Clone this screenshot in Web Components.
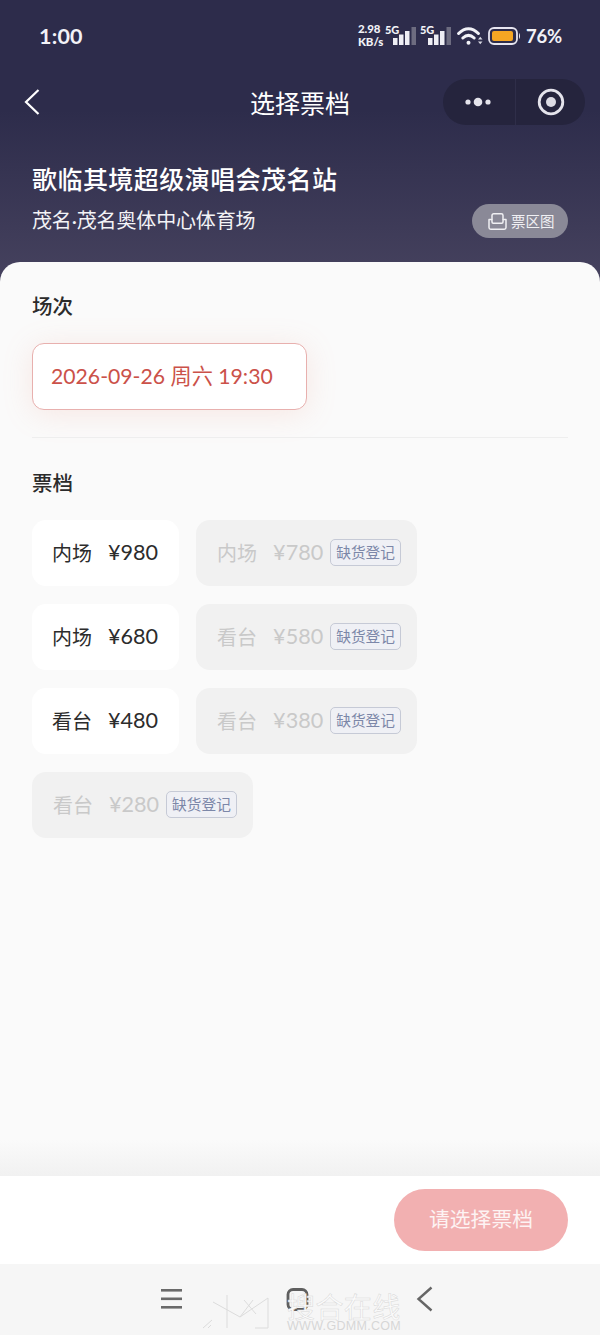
<!DOCTYPE html>
<html lang="zh-CN">
<head>
<meta charset="utf-8">
<title>选择票档</title>
<style>
  html, body { margin: 0; padding: 0; }
  body { width: 600px; height: 1335px; overflow: hidden; font-family: "Noto Sans CJK SC", "Noto Sans", sans-serif; }
</style>
</head>
<body>
<ticket-app></ticket-app>

<script>
const SANS = `"Noto Sans CJK SC", "Noto Sans", sans-serif`;
const LATIN = `Lato, "Noto Sans CJK SC", sans-serif`;

class BaseElement extends HTMLElement {
  constructor() {
    super();
    this.attachShadow({mode: 'open'});
  }

  render(html) {
    this.shadowRoot.innerHTML = html;
  }
}

class StatusBar extends BaseElement {
  connectedCallback() {
    const bars = `
      <svg class="bars" width="23" height="18" viewBox="0 0 23 18">
        <rect x="0" y="11" width="4.500" height="7" fill="#eeeef4"/>
        <rect x="6" y="7.500" width="4.500" height="10.500" fill="#eeeef4"/>
        <rect x="12" y="4" width="4.500" height="14" fill="#eeeef4"/>
        <rect x="18.500" y="0" width="4.500" height="18" fill="#6d6c80"/>
      </svg>`;

    this.render(`
      <style>
        :host { display: flex; align-items: center; height: 71px; padding: 0 38px 0 39px; color: #f2f2f7; font-family: ${LATIN}; }
        .time { font-size: 21.500px; font-weight: 700; letter-spacing: .2px; }
        .right { margin-left: auto; display: flex; align-items: center; }
        .speed { font-size: 11.500px; line-height: 12.500px; font-weight: 900; width: 27px; letter-spacing: -.1px; white-space: nowrap; }
        .net { display: flex; align-items: flex-start; }
        .net b { font-size: 11px; line-height: 12px; font-weight: 900; width: 14px; margin-top: -3px; }
        .bars { margin-left: -6px; }
        .wifi { margin-left: 6px; }
        .battery { margin-left: 5px; }
        .pct { font-size: 18.500px; font-weight: 700; margin-left: 5px; letter-spacing: -.2px; }
      </style>
      <span class="time">1:00</span>
      <div class="right">
        <div class="speed">2.98<br>KB/s</div>
        <div class="net"><b>5G</b>${bars}</div>
        <div class="net" style="margin-left:4px"><b>5G</b>${bars}</div>
        <svg class="wifi" width="26" height="20" viewBox="0 0 26 20" fill="none" stroke="#f2f2f7" stroke-width="3" stroke-linecap="round">
          <path d="M1.600 7.500C8 1 15 1 21.400 7.500"/>
          <path d="M5.800 12C9.500 8.500 13.500 8.500 17.200 12"/>
          <circle cx="11.500" cy="16.800" r="2" fill="#f2f2f7" stroke="none"/>
          <path d="M21 13.500h4.500l-2.250-2.800zM21 15.500h4.500l-2.250 2.800z" fill="#d8d8e2" stroke="none"/>
        </svg>
        <svg class="battery" width="33" height="18" viewBox="0 0 33 18">
          <rect x="1" y="1" width="28" height="16" rx="5" fill="none" stroke="#e7e5f0" stroke-width="1.800"/>
          <rect x="4" y="4" width="21" height="10" rx="2" fill="#f5a623"/>
          <path d="M31 6c1.300.8 1.300 5.200 0 6z" fill="#e7e5f0"/>
        </svg>
        <span class="pct">76%</span>
      </div>
    `);
  }
}

class NavBar extends BaseElement {
  connectedCallback() {
    this.render(`
      <style>
        :host { display: flex; align-items: center; justify-content: space-between; height: 62px; padding: 0 15px 0 24px; position: relative; color: #fff; }
        .title { position: absolute; left: 0; right: 0; text-align: center; font: 400 25px/62px ${SANS}; }
        .back { display: block; position: relative; }
        .capsule { position: relative; display: flex; align-items: center; width: 142px; height: 46px; box-sizing: border-box; border-radius: 23px; background: #25243d; }
        .capsule > div { flex: 1; display: flex; justify-content: center; align-items: center; height: 100%; }
        .capsule > div:first-child { flex: 0 0 72px; border-right: 1px solid #2f2e49; }
      </style>
      <svg class="back" width="16" height="26" viewBox="0 0 16 26" fill="none" stroke="#fff" stroke-width="2.200">
        <path d="M14.500 1 2 13l12.500 12"/>
      </svg>
      <div class="title">选择票档</div>
      <div class="capsule">
        <div>
          <svg width="32" height="12" viewBox="0 0 32 12" fill="#e5e4ec">
            <circle cx="5" cy="6" r="2.600"/><circle cx="15" cy="6" r="4.300"/><circle cx="25" cy="6" r="2.600"/>
          </svg>
        </div>
        <div>
          <svg width="28" height="28" viewBox="0 0 28 28">
            <circle cx="14" cy="14" r="11.800" fill="none" stroke="#e5e4ec" stroke-width="2.800"/>
            <circle cx="14" cy="14" r="5" fill="#dcdbe4"/>
          </svg>
        </div>
      </div>
    `);
  }
}

class EventHeader extends BaseElement {
  connectedCallback() {
    this.render(`
      <style>
        :host { display: block; height: 129px; box-sizing: border-box; padding: 29px 32px 0; color: #fff; }
        .name { font: 500 25px/32px ${SANS}; letter-spacing: .45px; }
        .row { display: flex; align-items: center; justify-content: space-between; margin-top: 10px; }
        .venue { font: 400 20px/32px ${SANS}; margin-bottom: 2px; letter-spacing: -.15px; color: #f3f3f6; }
        .map { display: flex; align-items: center; gap: 4px; box-sizing: border-box; width: 96px; height: 34px; padding-left: 16px; border-radius: 17px; background: #8a8997; font: 400 14.500px/34px ${SANS}; color: #f0f0f3; }
      </style>
      <div class="name"><slot name="name"></slot></div>
      <div class="row">
        <div class="venue"><slot name="venue"></slot></div>
        <div class="map">
          <svg width="19" height="17" viewBox="0 0 19 17" fill="none" stroke="#f0f0f3" stroke-width="1.500" stroke-linejoin="round">
            <path d="M4 7V2.500A1.700 1.700 0 0 1 5.700.8h7.600A1.700 1.700 0 0 1 15 2.500V7"/>
            <path d="M1 6.500h2c.6 0 1 .4 1 1V9c0 .8.5 1.200 1.200 1.200h8.600c.7 0 1.200-.4 1.200-1.200V7.500c0-.6.4-1 1-1h2v8a1.700 1.700 0 0 1-1.700 1.700H2.700A1.700 1.700 0 0 1 1 14.500z"/>
          </svg>
          <span>票区图</span>
        </div>
      </div>
    `);
  }
}

class SectionBlock extends BaseElement {
  connectedCallback() {
    this.render(`
      <style>
        :host { display: block; }
        h2 { margin: 0; font: 500 20.500px/26px ${SANS}; color: #2b2b2b; }
        .body { margin-top: var(--gap, 25px); }
      </style>
      <h2>${this.getAttribute('label')}</h2>
      <div class="body"><slot></slot></div>
    `);
  }
}

class SessionCard extends BaseElement {
  connectedCallback() {
    this.render(`
      <style>
        :host { display: flex; align-items: center; box-sizing: border-box; width: 275px; height: 67px; padding-left: 18px; border: 1px solid #e8b0ae; border-radius: 12px; background: #fff; box-shadow: 0 4px 30px rgba(240, 150, 130, .18); color: #cb5149; font: 400 21.200px/1 ${LATIN}; white-space: nowrap; }
      </style>
      <slot></slot>
    `);
  }
}

class TicketItem extends BaseElement {
  connectedCallback() {
    const soldOut = this.hasAttribute('sold-out');
    this.render(`
      <style>
        :host { display: flex; align-items: center; box-sizing: border-box; height: 66px; padding: 0 21px 0 20px; border-radius: 14px; background: #fff; color: #2c2c2c; white-space: nowrap; }
        :host([sold-out]) { background: #f1f1f1; color: #c9c9c9; padding: 0 16px 0 21px; }
        .area { font: 400 20px/1 ${SANS}; }
        .price { font: 400 21.600px/1 ${LATIN}; margin-left: 16px; }
        .tag { box-sizing: border-box; height: 27px; margin: -1px 0 0 7px; padding: 0 5px; border: 1px solid #c6cad6; border-radius: 5px; background: #eff0f5; color: #7c87a8; font: 400 14.700px/24px ${SANS}; }
      </style>
      <span class="area">${this.getAttribute('area')}</span>
      <span class="price">¥${this.getAttribute('price')}</span>
      ${soldOut ? '<span class="tag">缺货登记</span>' : ''}
    `);
  }
}

class ActionBar extends BaseElement {
  connectedCallback() {
    this.render(`
      <style>
        :host { display: flex; justify-content: flex-end; align-items: flex-start; height: 88px; box-sizing: border-box; padding: 13px 32px 0 0; background: #fff; }
        button { width: 174px; height: 62px; padding: 0 0 3px; border: 0; border-radius: 31px; background: #f2b0b1; color: #fdf3f3; font: 400 20.800px/1 ${SANS}; }
      </style>
      <button><slot></slot></button>
    `);
  }
}

class SystemNav extends BaseElement {
  connectedCallback() {
    this.render(`
      <style>
        :host { display: block; position: relative; height: 71px; background: #f6f6f6; }
        .keys { display: flex; height: 100%; }
        .keys svg { position: relative; top: 24px; }
        .mark { position: absolute; left: 200px; top: 26px; width: 205px; height: 45px; }
        .mark svg { position: absolute; left: 0; top: 0; }
        .cn { position: absolute; left: 87px; top: 3px; font: 400 28px/26px ${SANS}; letter-spacing: .4px; color: #fbfbfb; -webkit-text-stroke: .5px #d8d8d8; white-space: nowrap; }
        .en { position: absolute; left: 87px; top: 29px; font: 400 12.500px/14px "Liberation Sans", sans-serif; letter-spacing: .3px; color: #d6d6d6; white-space: nowrap; }
      </style>
      <div class="keys">
        <svg style="margin-left:160px" width="23" height="22" viewBox="0 0 23 22" fill="#6a6a6a">
          <rect x="1" y="1" width="21" height="2.600"/><rect x="1" y="9.500" width="21" height="2.600"/><rect x="1" y="18" width="21" height="2.600"/>
        </svg>
        <svg style="margin-left:103px" width="24" height="24" viewBox="0 0 24 24" fill="none" stroke="#5f5f5f" stroke-width="2.800">
          <rect x="2" y="1.500" width="19" height="20" rx="5"/>
        </svg>
        <svg style="margin-left:106px;top:22px" width="18" height="27" viewBox="0 0 18 27" fill="none" stroke="#666" stroke-width="2.400">
          <path d="M15.500 1.500 2.500 13l13 11.500"/>
        </svg>
      </div>
      <div class="mark">
        <svg width="72" height="42" viewBox="0 0 72 42" fill="none" stroke="#dcdcdc" stroke-width="1">
          <path d="M13 12 40 27 68 8M27 5V38M68 8V38H55M53 10 40 27M44 10 56 24M3 38l9-8M8 38l3-3"/>
        </svg>
        <span class="cn">搜合在线</span>
        <span class="en">WWW.GDMM.COM</span>
      </div>
    `);
  }
}

class TicketApp extends BaseElement {
  connectedCallback() {
    const tickets = [
      ['内场', 980, false], ['内场', 780, true],
      ['内场', 680, false], ['看台', 580, true],
      ['看台', 480, false], ['看台', 380, true],
      ['看台', 280, true]
    ];
    const items = tickets.map(([area, price, out]) =>
      `<ticket-item area="${area}" price="${price}"${out ? ' sold-out' : ''}></ticket-item>`).join('');

    this.render(`
      <style>
        :host { display: flex; flex-direction: column; width: 600px; height: 1335px; background: linear-gradient(#2d2c4b 0, #2d2c4b 110px, #47435f 290px) no-repeat; background-size: 100% 290px; font-family: ${SANS}; }
        .panel { flex: 1; display: flex; flex-direction: column; min-height: 0; box-sizing: border-box; padding: 30px 32px 0; border-radius: 20px 20px 0 0; background: linear-gradient(#fafafa 0, #fafafa calc(100% - 36px), #f1f1f1 100%); }
        hr { width: 100%; height: 1px; margin: 27px 0 31px; border: 0; background: #eeeeee; }
        .grid { display: flex; flex-wrap: wrap; gap: 18px 17px; }
        .dot { font-family: Lato, sans-serif; }
      </style>
      <status-bar></status-bar>
      <nav-bar></nav-bar>
      <event-header>
        <span slot="name">歌临其境超级演唱会茂名站</span>
        <span slot="venue">茂名<span class="dot">·</span>茂名奥体中心体育场</span>
      </event-header>
      <main class="panel">
        <section-block label="场次">
          <session-card>2026-09-26 周六 19:30</session-card>
        </section-block>
        <hr>
        <section-block label="票档">
          <div class="grid">${items}</div>
        </section-block>
      </main>
      <action-bar>请选择票档</action-bar>
      <system-nav></system-nav>
    `);
  }
}

customElements.define('status-bar', StatusBar);
customElements.define('nav-bar', NavBar);
customElements.define('event-header', EventHeader);
customElements.define('section-block', SectionBlock);
customElements.define('session-card', SessionCard);
customElements.define('ticket-item', TicketItem);
customElements.define('action-bar', ActionBar);
customElements.define('system-nav', SystemNav);
customElements.define('ticket-app', TicketApp);
</script>
</body>
</html>
